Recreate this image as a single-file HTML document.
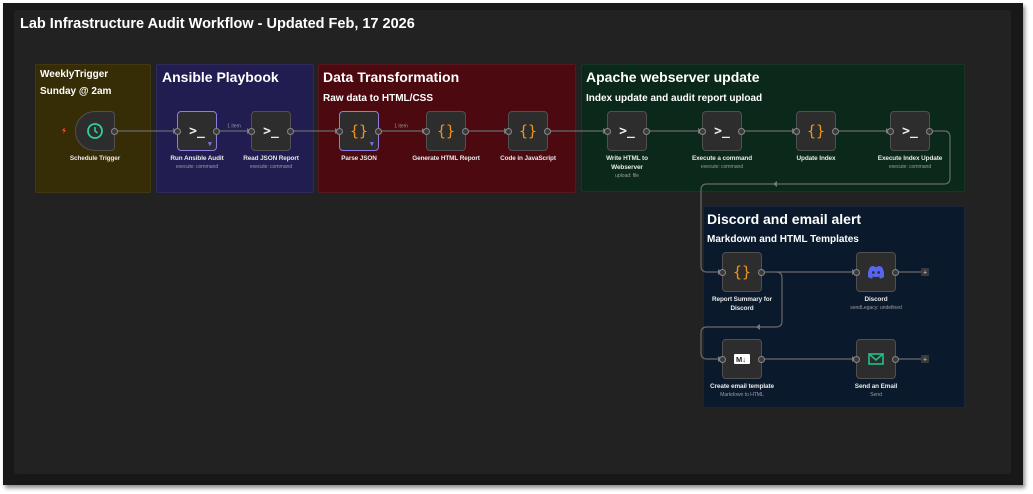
<!DOCTYPE html><html><head><style>
body{margin:0;width:1033px;height:494px;background:#fff;position:relative;overflow:hidden;font-family:"Liberation Sans",sans-serif}
.a{position:absolute}
.g{position:absolute;border:1px solid rgba(255,255,255,.06);border-radius:2px}
.gt{position:absolute;color:#fff;font-weight:bold;white-space:nowrap}
.n{position:absolute;width:40px;height:40px;background:#2d2d2d;border:1px solid #505050;border-radius:4px;box-sizing:border-box;display:flex;align-items:center;justify-content:center;color:#eee;font-family:"DejaVu Sans Mono",monospace;font-size:13px;font-weight:bold}
.p{position:absolute;width:7px;height:7px;border-radius:50%;background:#3a3a3a;border:1px solid #888;box-sizing:border-box;top:15.5px}
.l{position:absolute;width:120px;text-align:center;color:#e8e8e8;font-size:6.4px;font-weight:bold;line-height:9px;letter-spacing:-0.1px}
.s{display:block;color:#9a9a9a;font-size:5.2px;font-weight:normal;line-height:9px}
.cb{color:#f0941d;font-size:15px;font-weight:normal}
</style></head><body>
<div class="a" style="left:3px;top:3px;width:1020px;height:482px;background:#181818;box-shadow:2px 3px 4px rgba(0,0,0,.45)"></div>
<div class="a" style="left:14px;top:10px;width:997px;height:464px;background:#222;border-radius:3px"></div>
<div class="gt" style="left:20px;top:16px;font-size:14.5px">Lab Infrastructure Audit Workflow - Updated Feb, 17 2026</div>

<div class="g" style="left:35px;top:64px;width:114px;height:127px;background:#362c05"></div>
<div class="gt" style="left:40px;top:69px;font-size:10px">WeeklyTrigger</div>
<div class="gt" style="left:40px;top:86px;font-size:10px">Sunday @ 2am</div>
<div class="g" style="left:156px;top:64px;width:156px;height:127px;background:#211d50"></div>
<div class="gt" style="left:162px;top:69px;font-size:14px">Ansible Playbook</div>
<div class="g" style="left:318px;top:64px;width:256px;height:127px;background:#4c0910"></div>
<div class="gt" style="left:323px;top:69px;font-size:14px">Data Transformation</div>
<div class="gt" style="left:323px;top:93px;font-size:10px">Raw data to HTML/CSS</div>
<div class="g" style="left:581px;top:64px;width:382px;height:126px;background:#0b291a"></div>
<div class="gt" style="left:586px;top:69px;font-size:14px">Apache webserver update</div>
<div class="gt" style="left:586px;top:93px;font-size:10px">Index update and audit report upload</div>
<div class="g" style="left:703px;top:206px;width:260px;height:200px;background:#0a1a2c"></div>
<div class="gt" style="left:707px;top:211px;font-size:14px">Discord and email alert</div>
<div class="gt" style="left:707px;top:234px;font-size:10px">Markdown and HTML Templates</div>

<svg class="a" style="left:0;top:0" width="1033" height="494">
<g stroke="#6a6a6a" stroke-width="1.2" fill="none">
<path d="M116 131H177M216 131H251M290 131H339M378 131H426M466 131H508M547 131H607M647 131H702M742 131H796M836 131H890"/>
<path d="M930 131H944Q950 131 950 137V178Q950 184 944 184H707Q701 184 701 190V266Q701 272 707 272H722"/>
<path d="M762 272H856M762 272H776Q782 272 782 278V321Q782 327 776 327H707Q701 327 701 333V353Q701 359 707 359H722M762 359H856M896 272H921M896 359H921"/>
</g>
<g fill="#777"><path d="M173 128l4 3-4 3zM247 128l4 3-4 3zM335 128l4 3-4 3zM422 128l4 3-4 3zM504 128l4 3-4 3zM603 128l4 3-4 3zM698 128l4 3-4 3zM792 128l4 3-4 3zM886 128l4 3-4 3zM718 269l4 3-4 3zM852 269l4 3-4 3zM718 356l4 3-4 3zM852 356l4 3-4 3zM777 181l-4 3 4 3zM760 324l-4 3 4 3z"/></g>
<rect x="921" y="268" width="8" height="8" rx="1" fill="#3a3a3a"/><rect x="921" y="355" width="8" height="8" rx="1" fill="#3a3a3a"/>
<text x="925" y="274.5" fill="#ccc" font-size="7" text-anchor="middle">+</text><text x="925" y="361.5" fill="#ccc" font-size="7" text-anchor="middle">+</text>
<rect x="225" y="122" width="18" height="7" fill="#211d50"/><text x="234" y="127.5" fill="#999" font-size="5" text-anchor="middle" font-family="Liberation Sans">1 item</text>
<rect x="392" y="122" width="18" height="7" fill="#4c0910"/><text x="401" y="127.5" fill="#999" font-size="5" text-anchor="middle" font-family="Liberation Sans">1 item</text>
<path d="M64 128l-2 3h2l-1 3 3-4h-2l1-2z" fill="#e8502a"/>
</svg>

<div class="n" style="left:75px;top:111px;border-radius:20px 4px 4px 20px"><svg width="18" height="18" viewBox="0 0 18 18"><circle cx="9" cy="9" r="7" fill="none" stroke="#2fcf9d" stroke-width="1.8"/><path d="M9 5v4l2.5 2" fill="none" stroke="#2fcf9d" stroke-width="1.6"/></svg><div class="p" style="left:35px"></div></div>
<div class="l" style="left:35px;top:154px">Schedule Trigger</div>

<div class="n" style="left:177px;top:111px;border-color:#8a7fe0">&gt;_<div class="p" style="left:-4px"></div><div class="p" style="left:35px"></div><span class="a" style="right:4px;bottom:2px;color:#7a6ee8;font-size:7px">▼</span></div>
<div class="l" style="left:137px;top:154px">Run Ansible Audit<span class="s">execute: command</span></div>
<div class="n" style="left:251px;top:111px">&gt;_<div class="p" style="left:-4px"></div><div class="p" style="left:35px"></div></div>
<div class="l" style="left:211px;top:154px">Read JSON Report<span class="s">execute: command</span></div>

<div class="n cb" style="left:339px;top:111px;border-color:#8a7fe0">{}<div class="p" style="left:-4px"></div><div class="p" style="left:35px"></div><span class="a" style="right:4px;bottom:2px;color:#7a6ee8;font-size:7px">▼</span></div>
<div class="l" style="left:299px;top:154px">Parse JSON</div>
<div class="n cb" style="left:426px;top:111px">{}<div class="p" style="left:-4px"></div><div class="p" style="left:35px"></div></div>
<div class="l" style="left:386px;top:154px">Generate HTML Report</div>
<div class="n cb" style="left:508px;top:111px">{}<div class="p" style="left:-4px"></div><div class="p" style="left:35px"></div></div>
<div class="l" style="left:468px;top:154px">Code in JavaScript</div>

<div class="n" style="left:607px;top:111px">&gt;_<div class="p" style="left:-4px"></div><div class="p" style="left:35px"></div></div>
<div class="l" style="left:567px;top:154px">Write HTML to<br>Webserver<span class="s">upload: file</span></div>
<div class="n" style="left:702px;top:111px">&gt;_<div class="p" style="left:-4px"></div><div class="p" style="left:35px"></div></div>
<div class="l" style="left:662px;top:154px">Execute a command<span class="s">execute: command</span></div>
<div class="n cb" style="left:796px;top:111px">{}<div class="p" style="left:-4px"></div><div class="p" style="left:35px"></div></div>
<div class="l" style="left:756px;top:154px">Update Index</div>
<div class="n" style="left:890px;top:111px">&gt;_<div class="p" style="left:-4px"></div><div class="p" style="left:35px"></div></div>
<div class="l" style="left:850px;top:154px">Execute Index Update<span class="s">execute: command</span></div>

<div class="n cb" style="left:722px;top:252px">{}<div class="p" style="left:-4px"></div><div class="p" style="left:35px"></div></div>
<div class="l" style="left:682px;top:295px">Report Summary for<br>Discord</div>
<div class="n" style="left:856px;top:252px"><svg width="18" height="14" viewBox="0 0 18 14"><path d="M3 2Q6 0.5 7 1L7.5 2Q9 1.7 10.5 2L11 1Q13 1 15 2Q17.5 6 17 12Q15 13.5 13 13.5L12 12Q13 11.6 14 11Q9 13 4 11Q5 11.6 6 12L5 13.5Q3 13.5 1 12Q0.5 6 3 2Z" fill="#5865f2"/><circle cx="6.3" cy="7.5" r="1.4" fill="#2d2d2d"/><circle cx="11.7" cy="7.5" r="1.4" fill="#2d2d2d"/></svg><div class="p" style="left:-4px"></div><div class="p" style="left:35px"></div></div>
<div class="l" style="left:816px;top:295px">Discord<span class="s">sendLegacy: undefined</span></div>
<div class="n" style="left:722px;top:339px"><svg width="16" height="10" viewBox="0 0 16 10"><rect width="16" height="10" rx="1" fill="#fff"/><text x="2" y="8" font-size="7.5" font-weight="bold" fill="#222" font-family="Liberation Sans">M↓</text></svg><div class="p" style="left:-4px"></div><div class="p" style="left:35px"></div></div>
<div class="l" style="left:682px;top:382px">Create email template<span class="s">Markdown to HTML</span></div>
<div class="n" style="left:856px;top:339px"><svg width="16" height="12" viewBox="0 0 16 12"><rect x="1" y="1" width="14" height="10" fill="none" stroke="#22c08a" stroke-width="1.6"/><path d="M1 1l7 6 7-6" fill="none" stroke="#22c08a" stroke-width="1.6"/></svg><div class="p" style="left:-4px"></div><div class="p" style="left:35px"></div></div>
<div class="l" style="left:816px;top:382px">Send an Email<span class="s">Send</span></div>
</body></html>
